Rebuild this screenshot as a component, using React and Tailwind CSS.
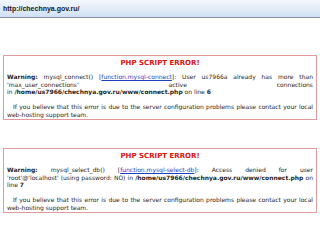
const J = ({ children, className = "" }) => (
  <div className={"text-justify [text-align-last:justify] whitespace-nowrap-0 " + className}>{children}</div>
);
const L = ({ children, className = "" }) => <div className={className}>{children}</div>;

function Box({ lines, className = "" }) {
  return (
    <div className={"border border-[#e49a9a] px-[3px] pt-[3px] pb-[1px] " + className}>
      <div className="text-center text-[#e01010] font-bold text-[7px] leading-[8px]">PHP SCRIPT ERROR!</div>
      <div className="mt-[6px]">{lines}</div>
      <div className="mt-[7.5px]">
        <J className="pl-[6px]">If you believe that this error is due to the server configuration problems please contact your local</J>
        <L>web-hosting support team.</L>
      </div>
    </div>
  );
}

export default function App() {
  return (
    <div className="w-[320px] h-[240px] bg-white overflow-hidden">
      <div className="h-[18px] bg-gradient-to-b from-[#f4f8fd] to-[#cfe0f4] border-b border-[#8a8f96] flex items-center pl-[3px]">
        <span className="text-[7px] leading-none font-bold text-[#1a1a1a] font-['Liberation_Sans',Arial,sans-serif]">http://chechnya.gov.ru/</span>
      </div>
      <div className="px-[3px] pt-[37px] font-['DejaVu_Sans',sans-serif] text-[6px] leading-[7.5px] text-[#1e1e1e]">
        <Box
          lines={
            <>
              <J><b>Warning:</b> mysql_connect() [<a className="text-[#1a3fc0] underline">function.mysql-connect</a>]: User us7966a already has more than</J>
              <J>'max_user_connections' active connections</J>
              <L>in <b>/home/us7966/chechnya.gov.ru/www/connect.php</b> on line <b>6</b></L>
            </>
          }
        />
        <Box
          className="mt-[28px]"
          lines={
            <>
              <J><b>Warning:</b> mysql_select_db() [<a className="text-[#1a3fc0] underline">function.mysql-select-db</a>]: Access denied for user</J>
              <J>'root'@'localhost' (using password: NO) in <b>/home/us7966/chechnya.gov.ru/www/connect.php</b> on</J>
              <L>line <b>7</b></L>
            </>
          }
        />
      </div>
    </div>
  );
}
